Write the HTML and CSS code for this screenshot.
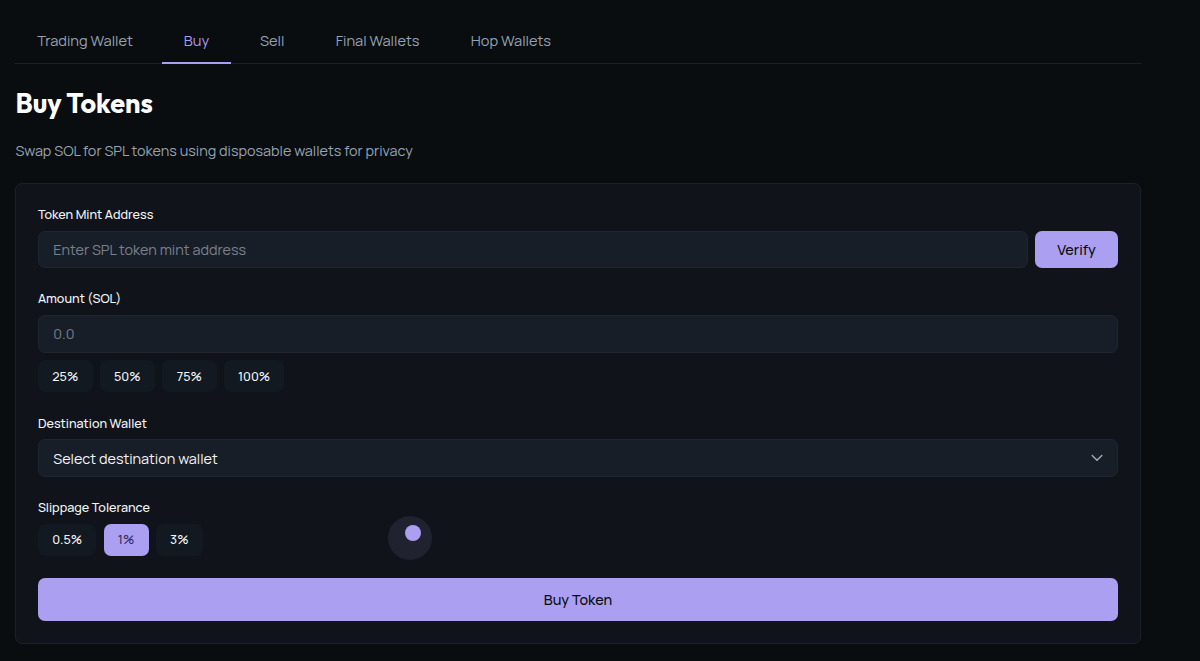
FILE: index.html
```html
<!DOCTYPE html>
<html lang="en">
<head>
    <meta charset="UTF-8">
    <meta name="viewport" content="width=device-width, initial-scale=1.0">
    <title>Buy Tokens</title>
    <link rel="stylesheet" href="styles.css">
</head>
<body>

<div class="container">
    <nav class="tabs">
        <button class="tab tab-trading">Trading Wallet</button>
        <button class="tab tab-buy active">Buy</button>
        <button class="tab tab-sell">Sell</button>
        <button class="tab tab-final">Final Wallets</button>
        <button class="tab tab-hop">Hop Wallets</button>
    </nav>

    <h1>Buy Tokens</h1>
    <p class="subtitle">Swap SOL for SPL tokens using disposable wallets for privacy</p>

    <div class="card">
        <!-- Token mint -->
        <div class="form-group">
            <label for="mint">Token Mint Address</label>
            <div class="input-row">
                <input type="text" id="mint" placeholder="Enter SPL token mint address">
                <button class="btn verify">Verify</button>
            </div>
        </div>

        <!-- Amount -->
        <div class="form-group">
            <label for="amount">Amount (SOL)</label>
            <input type="text" id="amount" placeholder="0.0">
            <div class="options percent">
                <button class="option">25%</button>
                <button class="option">50%</button>
                <button class="option">75%</button>
                <button class="option wide">100%</button>
            </div>
        </div>

        <!-- Destination -->
        <div class="form-group">
            <label class="label-wallet">Destination Wallet</label>
            <div class="select">
                <span>Select destination wallet</span>
                <svg width="12" height="8" viewBox="0 0 12 8" fill="none"><path d="M1.2 1.5 6 6.2 10.8 1.5" stroke="#a3adba" stroke-width="1.4" stroke-linecap="round" stroke-linejoin="round"/></svg>
            </div>
        </div>

        <!-- Slippage -->
        <div class="form-group slippage">
            <label>Slippage Tolerance</label>
            <div class="options">
                <button class="option half">0.5%</button>
                <button class="option one selected">1%</button>
                <button class="option three">3%</button>
            </div>
        </div>

        <button class="btn buy">Buy Token</button>
    </div>
</div>

<!-- Custom cursor -->
<div class="cursor-ring"></div>
<div class="cursor-dot"></div>

</body>
</html>
```
FILE: styles.css
```css
* {
    box-sizing: border-box;
}
body {
    margin: 0;
    height: 661px;
    overflow: hidden;
    background-color: #0a0d10;
    color: #f3f5f8;
    font-family: Manrope, Inter, sans-serif;
    font-size: 14.4px;
}
.container {
    width: 1125.2px;
    margin-left: 15.4px;
    padding-top: 20px;
}
button,
input {
    font-family: inherit;
    font-size: 14.4px;
}
button {
    border: none;
    padding: 0;
    cursor: pointer;
    white-space: nowrap;
}
.tabs {
    display: flex;
    gap: 7.2px;
    height: 44px;
    border-bottom: 1px solid #1b2128;
}
.tab {
    height: 44px;
    padding: 0 0 4px;
    background: none;
    color: #94a3b3;
    font-size: 14.6px;
}
.tab.active {
    padding-bottom: 2px;
    color: #a89bf0;
    border-bottom: 2px solid #ab9ff2;
}
.tab-trading {
    width: 139.4px;
}
.tab-buy {
    width: 69px;
}
.tab-sell {
    width: 68px;
}
.tab-final {
    width: 128.4px;
}
.tab-hop {
    width: 124px;
}
h1 {
    margin: 21px 0 0;
    font-family: Outfit, Lato, sans-serif;
    font-size: 27px;
    font-weight: 700;
    line-height: 36px;
    color: #fff;
}
.subtitle {
    margin: 18px 0 0;
    line-height: 24px;
    color: #94a3b3;
}
.card {
    height: 461px;
    margin-top: 20px;
    padding: 20px 21.5px;
    background-color: #10141a;
    border: 1px solid #1b2128;
    border-radius: 7px;
}
.form-group {
    margin-bottom: 20px;
}
label {
    display: block;
    height: 27px;
    line-height: 22px;
    font-size: 12.6px;
    font-weight: 500;
}
.label-wallet {
    height: 26.4px;
}
.input-row {
    display: flex;
    gap: 7px;
}
input,
.select {
    display: block;
    width: 100%;
    height: 37.4px;
    padding: 0 14.4px 1px;
    background-color: #181e28;
    border: 1px solid #1f262f;
    border-radius: 7px;
    color: #f3f5f8;
}
input::placeholder {
    color: #7b818b;
}
.select {
    display: flex;
    align-items: center;
    justify-content: space-between;
    padding: 0 13.6px 0 14.4px;
}
.select span {
    padding-top: 1.4px;
}
.btn {
    background-color: #ab9ff2;
    color: #0a0d10;
    border-radius: 7px;
    font-weight: 500;
}
.verify {
    flex: 0 0 83px;
    height: 37.4px;
}
.options {
    display: flex;
    gap: 7.2px;
}
.percent {
    margin-top: 7.2px;
    margin-bottom: 20.4px;
}
.option {
    width: 54.8px;
    height: 32.4px;
    background-color: #131920;
    color: #f3f5f8;
    border-radius: 7px;
    font-size: 12.6px;
    font-weight: 500;
}
.option.wide {
    width: 60.5px;
}
.option.half {
    width: 58.5px;
}
.option.one {
    width: 45px;
}
.option.three {
    width: 47px;
}
.option.selected {
    background-color: #ab9ff2;
    color: #332d5c;
}
.slippage {
    margin-bottom: 22px;
}
.buy {
    display: block;
    width: 100%;
    height: 43.5px;
}
.cursor-ring {
    position: absolute;
    left: 388px;
    top: 516px;
    width: 44px;
    height: 44px;
    border-radius: 50%;
    background-color: #20222f;
}
.cursor-dot {
    position: absolute;
    left: 405px;
    top: 525px;
    width: 16px;
    height: 16px;
    border-radius: 50%;
    background-color: #ab9ff2;
}
```
